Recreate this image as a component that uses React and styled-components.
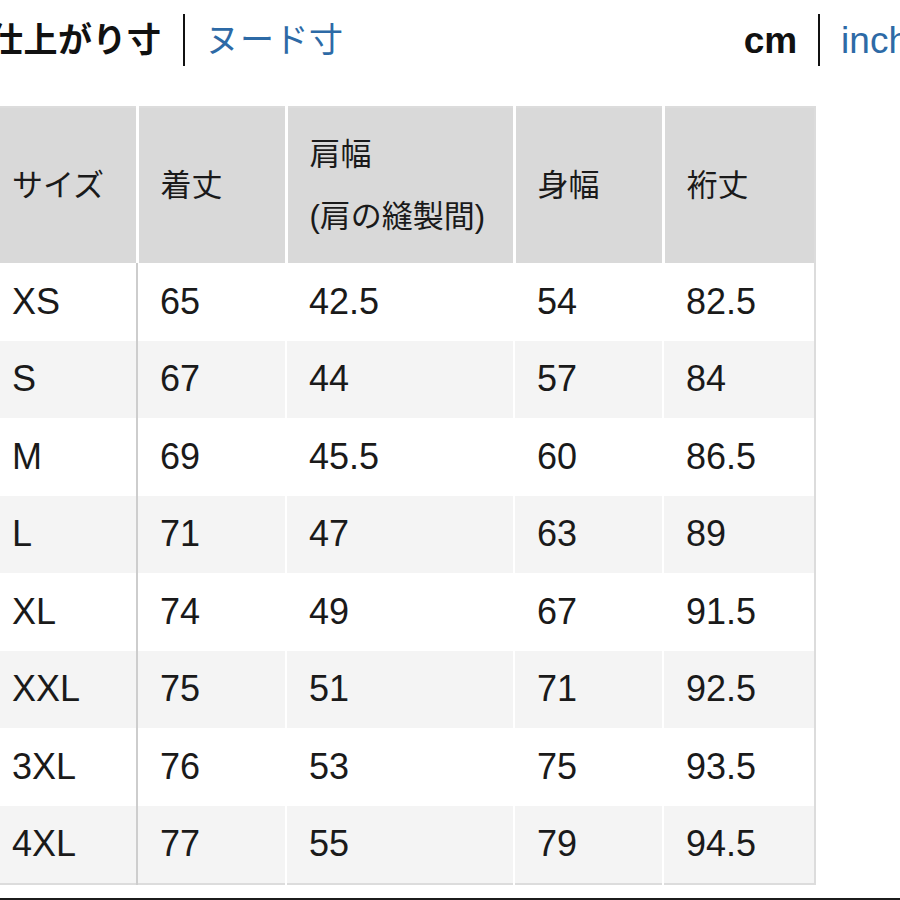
import React from 'react'
import styled, { createGlobalStyle } from 'styled-components'

const GlobalStyle = createGlobalStyle`
  html, body {
    margin: 0;
    padding: 0;
    background: #fff;
  }
  body {
    font-family: "Liberation Sans", "Noto Sans CJK JP", sans-serif;
    color: #1a1a1a;
  }
`

const Page = styled.div`
  width: 900px;
  height: 900px;
  overflow: hidden;
  position: relative;
`

const TopBar = styled.div`
  display: flex;
  align-items: center;
  height: 80px;
  width: 920px;
  margin-left: -11px;
`

const Group = styled.div`
  display: flex;
  align-items: center;
  gap: 21px;
  margin-left: ${p => p.right ? 'auto' : '0'};
`

const Tab = styled.span`
  font-family: "Liberation Sans", "Noto Sans CJK JP", sans-serif;
  font-size: ${p => p.latin ? '37px' : '34px'};
  font-weight: ${p => p.active ? 700 : 400};
  color: ${p => p.active ? '#111' : '#2d6aa6'};
  line-height: 1;
  letter-spacing: ${p => p.latin ? '0' : '0.5px'};
`

const Bar = styled.span`
  width: 2px;
  height: 52px;
  background: #111;
`

const Table = styled.table`
  margin-top: 26px;
  margin-left: -9px;
  border-collapse: collapse;
  border: 2px solid #dcdcdc;
  table-layout: fixed;
  width: 823px;
`

const HeadCell = styled.th`
  background: #d9d9d9;
  height: 155px;
  padding: 0 8px 0 ${p => p.first ? '19px' : '22px'};
  text-align: left;
  vertical-align: middle;
  font-family: "Liberation Sans", "Noto Sans CJK JP", sans-serif;
  font-weight: 400;
  font-size: 31px;
  line-height: 62px;
  color: #1a1a1a;
  border-right: 3px solid #fff;
  &:last-child {
    border-right: none;
  }
`

const Row = styled.tr`
  background: ${p => p.striped ? '#f4f4f4' : '#fff'};
`

const Cell = styled.td`
  height: 77.5px;
  padding: 0 8px 0 ${p => p.first ? '19px' : '22px'};
  font-size: 36px;
  color: #1a1a1a;
  vertical-align: middle;
  border-right: 2px solid ${p => p.first ? '#cdcdcd' : '#fff'};
  &:last-child {
    border-right: none;
  }
`

const Divider = styled.div`
  margin-top: 13px;
  height: 3px;
  background: #1c1c1c;
`

const widths = [145, 149, 228, 149, 152]

const headers = [
  ['サイズ'],
  ['着丈'],
  ['肩幅', '(肩の縫製間)'],
  ['身幅'],
  ['裄丈'],
]

const rows = [
  ['XS', '65', '42.5', '54', '82.5'],
  ['S', '67', '44', '57', '84'],
  ['M', '69', '45.5', '60', '86.5'],
  ['L', '71', '47', '63', '89'],
  ['XL', '74', '49', '67', '91.5'],
  ['XXL', '75', '51', '71', '92.5'],
  ['3XL', '76', '53', '75', '93.5'],
  ['4XL', '77', '55', '79', '94.5'],
]

const App = () => (
  <Page>
    <GlobalStyle />
    <TopBar>
      <Group>
        <Tab active>仕上がり寸</Tab>
        <Bar />
        <Tab>ヌード寸</Tab>
      </Group>
      <Group right>
        <Tab active latin>cm</Tab>
        <Bar />
        <Tab latin>inch</Tab>
      </Group>
    </TopBar>
    <Table>
      <colgroup>
        {widths.map((w, i) => <col key={i} style={{ width: w }} />)}
      </colgroup>
      <thead>
        <tr>
          {headers.map((lines, i) => (
            <HeadCell key={i} first={i === 0}>
              {lines.map((l, j) => <div key={j}>{l}</div>)}
            </HeadCell>
          ))}
        </tr>
      </thead>
      <tbody>
        {rows.map((r, i) => (
          <Row key={r[0]} striped={i % 2 === 1}>
            {r.map((v, j) => <Cell key={j} first={j === 0}>{v}</Cell>)}
          </Row>
        ))}
      </tbody>
    </Table>
    <Divider />
  </Page>
)

export default App
